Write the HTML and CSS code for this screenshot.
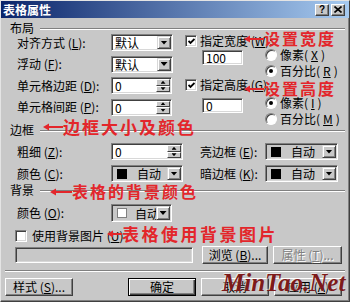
FILE: index.html
```html
<!DOCTYPE html>
<html lang="zh">
<head>
    <meta charset="UTF-8">
    <title>表格属性</title>
    <link rel="stylesheet" href="styles.css">
</head>
<body>
<div class="dialog">
    <!-- 标题栏 -->
    <div class="titlebar">
        <span class="title">表格属性</span>
        <div class="caption-btns">
            <span class="cap-btn">?</span>
            <span class="cap-btn">
                <svg width="8" height="7" viewBox="0 0 8 7"><path d="M0.5 0.5L7.5 6.5M7.5 0.5L0.5 6.5" stroke="#000" stroke-width="1.6"/></svg>
            </span>
        </div>
    </div>

    <div class="content">
        <!-- 布局 -->
        <div class="group-head"><span>布局</span><i class="groove"></i></div>
        <div class="layout">
            <div class="col-left">
                <div class="row">
                    <label>对齐方式 (<u>L</u>):</label>
                    <div class="field select"><span class="val">默认</span><span class="drop"></span></div>
                </div>
                <div class="row">
                    <label>浮动 (<u>F</u>):</label>
                    <div class="field select"><span class="val">默认</span><span class="drop"></span></div>
                </div>
                <div class="row">
                    <label>单元格边距 (<u>D</u>):</label>
                    <div class="field spin"><span class="val">0</span><span class="spin-btns"><i class="up"></i><i class="down"></i></span></div>
                </div>
                <div class="row">
                    <label>单元格间距 (<u>P</u>):</label>
                    <div class="field spin"><span class="val">0</span><span class="spin-btns"><i class="up"></i><i class="down"></i></span></div>
                </div>
            </div>

            <div class="col-right">
                <div class="check-row">
                    <span class="check on"><svg width="7" height="7" viewBox="0 0 7 7"><path d="M0.5 3L2.5 5L6.5 1" fill="none" stroke="#000" stroke-width="1.8"/></svg></span>
                    <span>指定宽度 (<u>W</u>):</span>
                </div>
                <div class="size-row">
                    <div class="field text"><span class="val">100</span></div>
                    <div class="radios">
                        <div class="radio-row"><span class="radio"></span>像素(<u>X</u>)</div>
                        <div class="radio-row"><span class="radio on"></span>百分比(<u>R</u>)</div>
                    </div>
                </div>
                <div class="check-row">
                    <span class="check on"><svg width="7" height="7" viewBox="0 0 7 7"><path d="M0.5 3L2.5 5L6.5 1" fill="none" stroke="#000" stroke-width="1.8"/></svg></span>
                    <span>指定高度 (<u>G</u>):</span>
                </div>
                <div class="size-row second">
                    <div class="field text"><span class="val">0</span></div>
                    <div class="radios">
                        <div class="radio-row"><span class="radio on"></span>像素(<u>I</u>)</div>
                        <div class="radio-row"><span class="radio"></span>百分比(<u>M</u>)</div>
                    </div>
                </div>
            </div>
        </div>

        <!-- 边框 -->
        <div class="group-head"><span>边框</span><i class="groove"></i></div>
        <div class="border-grid">
            <label>粗细 (<u>Z</u>):</label>
            <div class="field spin wide"><span class="val">0</span><span class="spin-btns"><i class="up"></i><i class="down"></i></span></div>
            <label>亮边框 (<u>E</u>):</label>
            <div class="field color wide-r"><span class="val"><i class="swatch"></i>自动</span><span class="drop"></span></div>

            <label>颜色 (<u>C</u>):</label>
            <div class="field color wide"><span class="val"><i class="swatch"></i>自动</span><span class="drop"></span></div>
            <label>暗边框 (<u>K</u>):</label>
            <div class="field color wide-r"><span class="val"><i class="swatch"></i>自动</span><span class="drop"></span></div>
        </div>

        <!-- 背景 -->
        <div class="group-head bg-head"><span>背景</span><i class="groove"></i></div>
        <div class="bg-row">
            <label>颜色 (<u>O</u>):</label>
            <div class="field color narrow"><span class="val"><i class="swatch white"></i>自动</span><span class="drop"></span></div>
        </div>
        <div class="img-row">
            <span class="check"></span>
            <span>使用背景图片 (<u>U</u>)</span>
        </div>
        <div class="path-row">
            <div class="field path"></div>
            <span class="btn browse">浏览 (<u>B</u>)...</span>
            <span class="btn props disabled">属性 (<u>T</u>)...</span>
        </div>

        <i class="separator"></i>

        <div class="actions">
            <span class="btn style-btn">样式 (<u>S</u>)...</span>
            <div class="action-group">
                <span class="btn default">确定</span>
                <span class="btn">取消</span>
                <span class="btn">应用 (<u>A</u>)</span>
            </div>
        </div>
    </div>

    <!-- 红色标注 -->
    <div class="note note-width"><svg class="arrow" width="20" height="8" viewBox="0 0 20 8"><path d="M0 4L6 0.5V7.5Z" fill="#e3262b"/><path d="M5 4H20" stroke="#e3262b" stroke-width="2"/></svg>设置宽度</div>
    <div class="note note-height"><svg class="arrow" width="20" height="8" viewBox="0 0 20 8"><path d="M0 4L6 0.5V7.5Z" fill="#e3262b"/><path d="M5 4H20" stroke="#e3262b" stroke-width="2"/></svg>设置高度</div>
    <div class="note note-border"><svg class="arrow" width="20" height="8" viewBox="0 0 20 8"><path d="M0 4L6 0.5V7.5Z" fill="#e3262b"/><path d="M5 4H20" stroke="#e3262b" stroke-width="2"/></svg>边框大小及颜色</div>
    <div class="note note-bg"><svg class="arrow" width="22" height="8" viewBox="0 0 22 8"><path d="M0 4L6 0.5V7.5Z" fill="#e3262b"/><path d="M5 4H22" stroke="#e3262b" stroke-width="2"/></svg>表格的背景颜色</div>
    <div class="note note-img"><svg class="arrow" width="15" height="8" viewBox="0 0 15 8"><path d="M0 4L6 0.5V7.5Z" fill="#e3262b"/><path d="M5 4H15" stroke="#e3262b" stroke-width="2"/></svg>表格使用背景图片</div>

    <div class="watermark">MinTao.Net</div>
</div>
</body>
</html>
```

FILE: styles.css
```css
/* 全局样式 */
* {
    margin: 0;
    padding: 0;
    box-sizing: border-box;
}

body {
    width: 350px;
    height: 302px;
    overflow: hidden;
    background: #c8c8c8;
    font-family: "Noto Sans CJK SC", "Liberation Sans", sans-serif;
    font-size: 12px;
    line-height: 14px;
    color: #000;
}

u {
    text-decoration: underline;
    text-underline-offset: 1px;
}

/* 对话框外框 */
.dialog {
    position: relative;
    width: 350px;
    height: 302px;
    background: #c8c8c8;
    border: 1px solid;
    border-color: #e4e4e4 #404040 #404040 #e4e4e4;
    box-shadow: inset -1px -1px #808080;
}

/* 标题栏 */
.titlebar {
    height: 17px;
    display: flex;
    align-items: center;
    justify-content: space-between;
    padding: 0 4px 0 2px;
    background: linear-gradient(to right, #0a246a, #a6caf0);
}

.title {
    color: #fff;
    font-weight: bold;
    font-size: 12px;
}

.caption-btns {
    display: flex;
    gap: 2px;
}

.cap-btn {
    width: 14px;
    height: 12px;
    display: flex;
    align-items: center;
    justify-content: center;
    background: #c8c8c8;
    border: 1px solid;
    border-color: #fff #404040 #404040 #fff;
    box-shadow: inset -1px -1px #808080;
    font-family: "Liberation Sans", sans-serif;
    font-weight: bold;
    font-size: 10px;
    line-height: 10px;
}

.content {
    padding: 0 4px 0 9px;
}

/* 分组标题 */
.group-head {
    display: flex;
    align-items: center;
    height: 13px;
    margin-top: 3px;
}

.groove {
    flex: 1;
    height: 2px;
    margin: 3px 0 0 6px;
    border-top: 1px solid #808080;
    border-bottom: 1px solid #fff;
}

/* 布局区 */
.layout {
    display: flex;
    height: 86px;
}

.col-left {
    margin-left: 7px;
    width: 167px;
    display: flex;
    flex-direction: column;
    gap: 4.5px;
}

.row {
    display: flex;
    align-items: center;
    height: 17px;
}

.row label,
.border-grid label,
.bg-row label {
    width: 94px;
    flex-shrink: 0;
    white-space: nowrap;
}

/* 输入框、下拉框 */
.field {
    display: flex;
    height: 17px;
    padding: 1px;
    background: #fff;
    border: 1px solid;
    border-color: #808080 #fff #fff #808080;
    box-shadow: inset 1px 1px #404040, inset -1px -1px #d8d8d8;
}

.field .val {
    flex: 1;
    display: flex;
    align-items: center;
    padding-left: 2px;
    line-height: 13px;
    white-space: nowrap;
}

.select {
    width: 62px;
}

.spin {
    width: 61px;
}

.wide {
    width: 72px;
}

.wide-r {
    width: 73px;
}

.narrow {
    width: 61px;
}

.drop {
    width: 14px;
    flex-shrink: 0;
    display: flex;
    align-items: center;
    justify-content: center;
    background: #c8c8c8;
    border: 1px solid;
    border-color: #d8d8d8 #404040 #404040 #d8d8d8;
    box-shadow: inset 1px 1px #fff, inset -1px -1px #808080;
}

.drop::after {
    content: "";
    width: 7px;
    height: 4px;
    background: #000;
    clip-path: polygon(0 0, 100% 0, 50% 100%);
}

.spin-btns {
    width: 14px;
    display: flex;
    flex-direction: column;
}

.spin-btns i {
    flex: 1;
    display: flex;
    align-items: center;
    justify-content: center;
    background: #c8c8c8;
    border: 1px solid;
    border-color: #fff #404040 #404040 #fff;
}

.spin-btns i::after {
    content: "";
    width: 5px;
    height: 3px;
    background: #000;
}

.spin-btns .up::after {
    clip-path: polygon(50% 0, 100% 100%, 0 100%);
}

.spin-btns .down::after {
    clip-path: polygon(0 0, 100% 0, 50% 100%);
}

/* 颜色下拉框 */
.color {
    background: #c8c8c8;
}

.color .val {
    padding-left: 4px;
    gap: 10px;
}

.swatch {
    width: 10px;
    height: 10px;
    flex-shrink: 0;
    background: #000;
}

.swatch.white {
    background: #fff;
    border: 1px solid #808080;
}

/* 背景色框较窄，文字被下拉按钮遮住一部分 */
.narrow .val {
    gap: 8px;
    min-width: 0;
    overflow-x: clip;
}

/* 右侧：宽度、高度 */
.col-right {
    padding-top: 1px;
}

.check-row {
    display: flex;
    align-items: center;
    height: 12px;
    margin-left: 1px;
    gap: 3px;
    white-space: nowrap;
}

.check {
    width: 12px;
    height: 12px;
    display: flex;
    align-items: center;
    justify-content: center;
    background: #fff;
    border: 1px solid;
    border-color: #808080 #fff #fff #808080;
    box-shadow: inset 1px 1px #404040, inset -1px -1px #d8d8d8;
}

.size-row {
    display: flex;
    height: 32px;
}

.size-row.second {
    margin-top: 4px;
}

.size-row .text {
    margin: 3px 0 0 18px;
    width: 41px;
    height: 15px;
}

.radios {
    margin-left: 22px;
}

.radio-row {
    display: flex;
    align-items: center;
    gap: 3px;
    height: 16px;
    white-space: nowrap;
}

.radio {
    position: relative;
    width: 12px;
    height: 12px;
    border-radius: 50%;
    background: #fff;
    border: 1px solid;
    border-color: #808080 #fff #fff #808080;
    box-shadow: inset 1px 1px #404040;
}

.radio.on::after {
    content: "";
    position: absolute;
    left: 3px;
    top: 3px;
    width: 4px;
    height: 4px;
    border-radius: 50%;
    background: #000;
}

/* 边框区 */
.border-grid {
    display: grid;
    grid-template-columns: 94px 89px 65px 73px;
    grid-auto-rows: 17px;
    row-gap: 5px;
    align-items: center;
    margin: 7px 0 0 7px;
}

.border-grid .field {
    height: 17px;
}

/* 背景区 */
.bg-head {
    margin-top: 1px;
}

.bg-row {
    display: flex;
    align-items: center;
    height: 18px;
    margin: 8px 0 0 7px;
}

.bg-row .field {
    height: 18px;
}

.img-row {
    display: flex;
    align-items: center;
    gap: 5px;
    height: 14px;
    margin: 7px 0 0 5px;
}

.path-row {
    display: flex;
    align-items: center;
    height: 18px;
    margin: 3px 0 0 5px;
}

.path {
    width: 178px;
    height: 16px;
    background: #c8c8c8;
}

/* 按钮 */
.btn {
    height: 18px;
    display: flex;
    align-items: center;
    justify-content: center;
    white-space: nowrap;
    background: #c8c8c8;
    border: 1px solid;
    border-color: #fff #404040 #404040 #fff;
    box-shadow: inset -1px -1px #808080;
}

.browse {
    width: 66px;
    margin-left: 9px;
}

.props {
    width: 69px;
    margin-left: 5px;
}

.btn.disabled {
    color: #808080;
    text-shadow: 1px 1px #fff;
}

.separator {
    display: block;
    height: 2px;
    margin: 6px 0 0 -5px;
    border-top: 1px solid #808080;
    border-bottom: 1px solid #fff;
}

.actions {
    display: flex;
    height: 18px;
    margin: 6px 3px 0 -5px;
}

.style-btn {
    width: 68px;
}

.action-group {
    display: flex;
    gap: 5px;
    margin-left: auto;
}

.action-group .btn {
    width: 68px;
}

.btn.default {
    border-color: #000;
    box-shadow: inset 1px 1px #fff, inset -1px -1px #404040, inset -2px -2px #808080;
}

/* 红色标注 */
.note {
    position: absolute;
    display: flex;
    align-items: center;
    height: 17px;
    color: #e3262b;
    font-weight: bold;
    font-size: 16px;
    line-height: 17px;
    letter-spacing: 2px;
    white-space: nowrap;
}

.note .arrow {
    flex-shrink: 0;
}

.note-width {
    left: 243px;
    top: 29px;
}

.note-height {
    left: 243px;
    top: 79px;
}

.note-border {
    left: 42px;
    top: 117px;
    font-size: 17px;
}

.note-bg {
    left: 49px;
    top: 182px;
}

.note-img {
    left: 106px;
    top: 224px;
    font-size: 17px;
    letter-spacing: 2.5px;
}

/* 水印 */
.watermark {
    position: absolute;
    left: 221px;
    top: 268px;
    font-family: "Liberation Serif", serif;
    font-style: italic;
    font-weight: bold;
    font-size: 25px;
    line-height: 28px;
    color: #7d1a1a;
    text-shadow: -1px -1px 0 rgba(255, 255, 255, 0.5);
}
```
